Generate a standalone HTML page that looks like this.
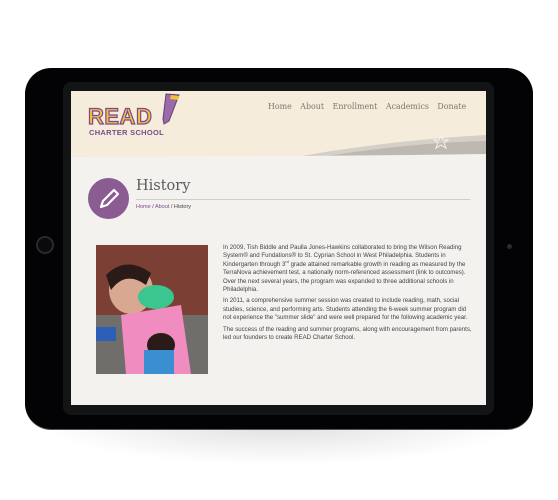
<!DOCTYPE html>
<html><head><meta charset="utf-8"><style>
*{margin:0;padding:0;box-sizing:border-box}
body{width:558px;height:500px;background:#fff;position:relative;overflow:hidden;font-family:"Liberation Sans",sans-serif}
.shadow{position:absolute;left:40px;top:425px;width:478px;height:40px;background:radial-gradient(ellipse at 50% 0%,rgba(0,0,0,.12),rgba(0,0,0,0) 70%)}
.body{position:absolute;left:25px;top:68px;width:508px;height:361px;background:#030306;border-radius:26px;box-shadow:0 1px 0 #555}
.bezel{position:absolute;left:63px;top:82px;width:431px;height:333px;background:#131416;border-radius:8px}
.btn{position:absolute;left:36px;top:236px;width:18px;height:18px;border-radius:50%;border:2px solid #2a2a2c;background:#0a0a0c}
.cam{position:absolute;left:507px;top:244px;width:5px;height:5px;border-radius:50%;background:#2a2a30}
.screen{position:absolute;left:71px;top:91px;width:415px;height:314px;background:#f3f2ef;overflow:hidden}
.hdr{position:absolute;left:0;top:0;width:415px;height:66px;background:#f5ecdb}
.nav{position:absolute;top:11px;left:197px;font-family:"DejaVu Serif","Liberation Serif",serif;font-size:7.9px;color:#7d7670;white-space:nowrap}
.nav span{margin-right:8.5px}
.read{position:absolute;left:17px;top:13px;font-family:"Liberation Sans",sans-serif;font-weight:bold;font-size:22px;color:#f4c03c;-webkit-text-stroke:1.2px #7b4b8f;letter-spacing:0.5px}
.cs{position:absolute;left:18px;top:37px;font-size:7.5px;color:#7b4b8f;font-weight:bold;letter-spacing:0.3px}
.title{position:absolute;left:65px;top:87px;font-family:"DejaVu Serif","Liberation Serif",serif;font-size:14.5px;color:#5c5a58}
.line{position:absolute;left:65px;top:108px;width:334px;height:1px;background:#cfcdca}
.bc{position:absolute;left:65px;top:113px;font-size:5.5px;color:#444}
.bc a{color:#7b4b8f;text-decoration:none}
.circ{position:absolute;left:17px;top:87px;width:41px;height:41px;border-radius:50%;background:#8a5c92}
.photo{position:absolute;left:25px;top:154px;width:112px;height:129px;overflow:hidden}
.txt{position:absolute;left:152px;top:153px;width:249px;font-size:6.1px;line-height:8.4px;color:#444}
.txt p{margin-bottom:3px}
sup{font-size:4px;line-height:0}
</style></head><body>
<div class="shadow"></div>
<div class="body"></div>
<div class="bezel"></div>
<div class="btn"></div><div class="cam"></div>
<div class="screen">
 <div class="hdr"></div>
 <svg style="position:absolute;left:0;top:0" width="415" height="80">
  <path d="M225 66 C290 54 360 47 415 44 L415 66 Z" fill="#d4d0c8"/>
  <path d="M250 66 C310 56 370 51 415 50 L415 66Z" fill="#bdb9b1"/>
  <path d="M0 66 L415 66 L415 63 L340 64 L230 65Z" fill="#f3f2ef"/>
  <polygon points="370,44 372,49 377,49 373,52 375,57 370,54 365,57 367,52 363,49 368,49" fill="none" stroke="#f5f2ea" stroke-width="1"/>
  <path d="M95 3 L108 4 L98 30 L93 33 L92 28 Z" fill="#9b6aa8" stroke="#6a3c7a" stroke-width="1"/>
  <path d="M100 4 L108 5 L107 9 L99 8Z" fill="#f4c03c"/>
 </svg>
 <div class="read">READ</div>
 <div class="cs">CHARTER SCHOOL</div>
 <div class="nav"><span>Home</span><span>About</span><span>Enrollment</span><span>Academics</span><span>Donate</span></div>
 <div class="circ"><svg width="41" height="41"><path d="M13 29 L15 23 L26 12 L30 16 L19 27 Z" fill="none" stroke="#fff" stroke-width="2.2" stroke-linejoin="round"/></svg></div>
 <div class="title">History</div>
 <div class="line"></div>
 <div class="bc"><a>Home</a> / <a>About</a> / History</div>
 <div class="photo"><svg width="112" height="129">
  <rect width="112" height="129" fill="#7b3f34"/>
  <rect y="70" width="112" height="59" fill="#6f6e6a"/>
  <ellipse cx="35" cy="45" rx="22" ry="24" fill="#d9a890"/>
  <path d="M10 30 Q30 10 55 28 L50 40 Q30 25 15 45Z" fill="#2a1a18"/>
  <ellipse cx="60" cy="52" rx="18" ry="12" fill="#3bc58f"/>
  <path d="M25 70 L85 60 L95 129 L30 129Z" fill="#f08cc0"/>
  <ellipse cx="65" cy="100" rx="14" ry="12" fill="#2a1a18"/>
  <rect x="48" y="105" width="30" height="24" fill="#3a8fd0"/>
  <rect x="0" y="82" width="20" height="14" fill="#2d5fb8"/>
 </svg></div>
 <div class="txt">
  <p>In 2009, Tish Biddle and Paulla Jones-Hawkins collaborated to bring the Wilson Reading System® and Fundations® to St. Cyprian School in West Philadelphia. Students in Kindergarten through 3<sup>rd</sup> grade attained remarkable growth in reading as measured by the TerraNova achievement test, a nationally norm-referenced assessment (link to outcomes). Over the next several years, the program was expanded to three additional schools in Philadelphia.</p>
  <p>In 2011, a comprehensive summer session was created to include reading, math, social studies, science, and performing arts. Students attending the 6-week summer program did not experience the "summer slide" and were well prepared for the following academic year.</p>
  <p>The success of the reading and summer programs, along with encouragement from parents, led our founders to create READ Charter School.</p>
 </div>
</div>
</body></html>
